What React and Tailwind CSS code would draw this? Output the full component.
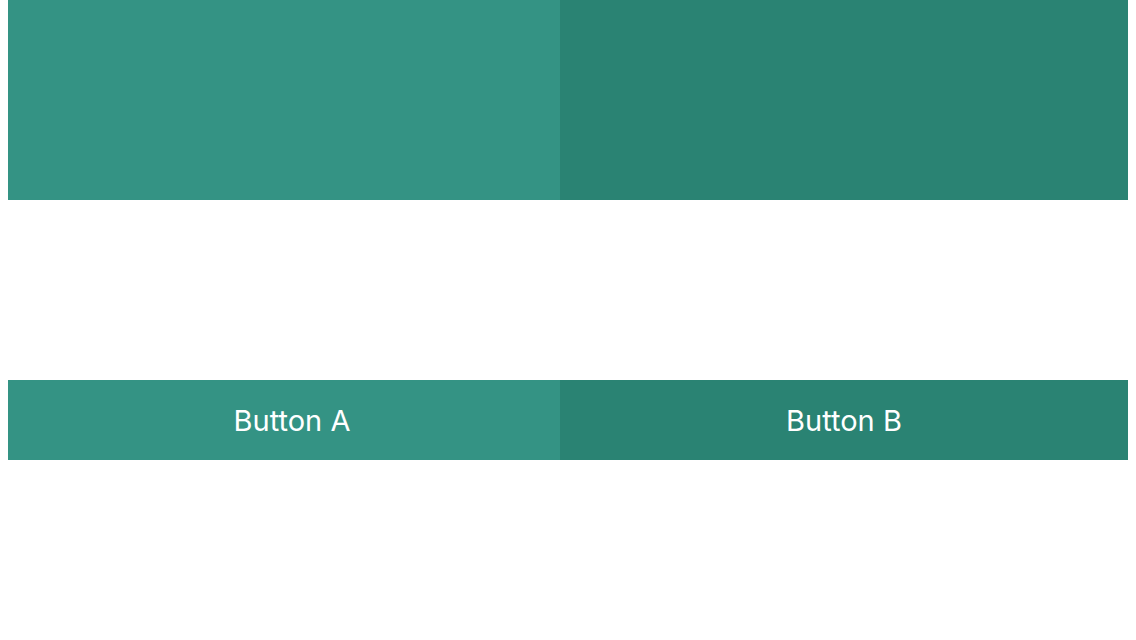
const App = () => {
    return (
        <div className="w-[1136px] h-[640px] bg-white px-2 font-['Inter',sans-serif]">
            {/* Top panels */}
            <div className="flex h-[200px]">
                <div className="w-[552px] bg-[#349384]"></div>
                <div className="flex-1 bg-[#2a8373]"></div>
            </div>

            {/* Buttons */}
            <div className="flex h-20 mt-[180px] text-white text-[29px] leading-none">
                <button className="w-[552px] pl-4 bg-[#349384] flex items-center justify-center font-['Inter',sans-serif]">
                    Button A
                </button>
                <button className="flex-1 bg-[#2a8373] flex items-center justify-center font-['Inter',sans-serif]">
                    Button B
                </button>
            </div>
        </div>
    );
};

export default App;
